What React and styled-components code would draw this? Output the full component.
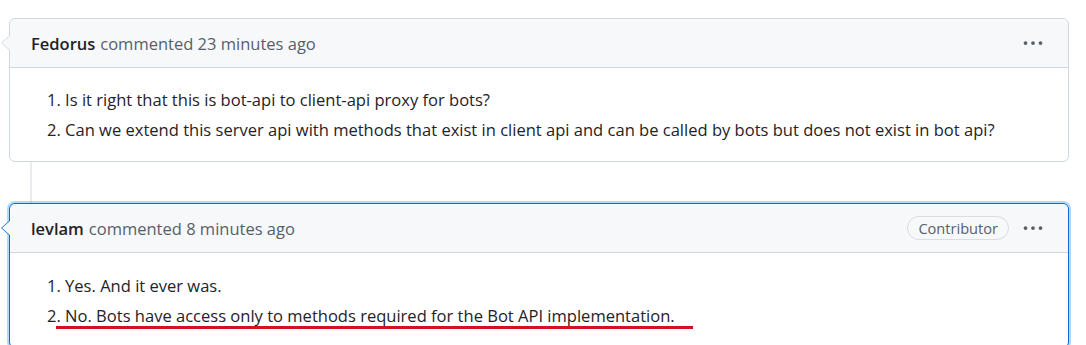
import styled, { createGlobalStyle, css } from "styled-components";

const GlobalStyle = createGlobalStyle`
  body {
    margin: 0;
    background: #ffffff;
    font-family: "Open Sans", "Noto Sans", sans-serif;
    color: #1f2328;
  }
`

const Page = styled.div`
  display: flex;
  flex-direction: column;
  padding: 18px 17px 0 9px;
`
const Thread = styled.div`
  display: flex;
  flex-direction: column;
`
const Connector = styled.div`
  width: 2px;
  height: 41px;
  margin-left: 21px;
  background-color: #eaecef;
`
const Card = styled.div`
  position: relative;
  border: 1px solid #d0d7de;
  border-radius: 6px;
  background: #ffffff;
  ${(p) => p.$active && css`
    border-color: #0969da;
    box-shadow: 0 0 0 2px rgba(84, 174, 255, 0.45);
  `}
  &::before, &::after {
    content: "";
    position: absolute;
    top: 16px;
    width: 0;
    height: 0;
    border-style: solid;
    border-color: transparent;
  }
  &::before {
    left: -9px;
    border-width: 8px 9px 8px 0;
    border-right-color: ${(p) => (p.$active ? "#0969da" : "#d0d7de")};
  }
  &::after {
    left: -8px;
    border-width: 8px 9px 8px 0;
    border-right-color: #f6f8fa;
  }
`
const Header = styled.div`
  display: flex;
  align-items: center;
  height: 48px;
  padding: 0 16px 0 21px;
  background-color: #f6f8fa;
  border-bottom: 1px solid #d0d7de;
  border-radius: 6px 6px 0 0;
  font-size: 16.5px;
  color: #57606a;
`
const Author = styled.span`
  font-weight: 600;
  color: #1f2328;
  margin-right: 5px;
`
const Spacer = styled.div`
  flex: 1;
`
const Badge = styled.span`
  display: inline-flex;
  align-items: center;
  height: 22px;
  padding: 0 10px;
  border: 1px solid #d8dee4;
  border-radius: 12px;
  font-size: 14.6px;
  color: #57606a;
  margin-right: 14px;
`
const Kebab = styled.svg`
  width: 20px;
  height: 20px;
  fill: #57606a;
  margin-right: 9px;
`
const Body = styled.ol`
  list-style: none;
  margin: 0;
  padding: ${(p) => (p.$active ? "18px" : "17px")} 16px 16px 37px;
  font-size: 16.55px;
  line-height: 30px;
`
const Item = styled.li``

const Scribble = styled.span`
  padding-right: 18px;
  padding-bottom: 2px;
  background: linear-gradient(#d3121f, #d3121f) no-repeat left bottom / 100% 3px;
`

function Dots() {
  return (
    <Kebab viewBox="0 0 16 16">
      <circle cx="2" cy="8" r="1.5" />
      <circle cx="8" cy="8" r="1.5" />
      <circle cx="14" cy="8" r="1.5" />
    </Kebab>
  );
}

function Comment({ author, when, badge, items, active }) {
  return (
    <Card $active={active}>
      <Header>
        <Author>{author}</Author>
        commented {when}
        <Spacer />
        {badge && <Badge>{badge}</Badge>}
        <Dots />
      </Header>
      <Body $active={active}>
        {items.map((it, i) => (
          <Item key={i}>
            {i + 1}
            {it.marked ? <Scribble>. {it.text}</Scribble> : `. ${it.text}`}
          </Item>
        ))}
      </Body>
    </Card>
  );
}

export default function App() {
  return (
    <Page>
      <GlobalStyle />
      <Thread>
        <Comment
          author="Fedorus"
          when="23 minutes ago"
          items={[
            { text: "Is it right that this is bot-api to client-api proxy for bots?" },
            { text: "Can we extend this server api with methods that exist in client api and can be called by bots but does not exist in bot api?" },
          ]}
        />
        <Connector />
        <Comment
          active
          author="levlam"
          when="8 minutes ago"
          badge="Contributor"
          items={[
            { text: "Yes. And it ever was." },
            { text: "No. Bots have access only to methods required for the Bot API implementation.", marked: true },
          ]}
        />
      </Thread>
    </Page>
  );
}
